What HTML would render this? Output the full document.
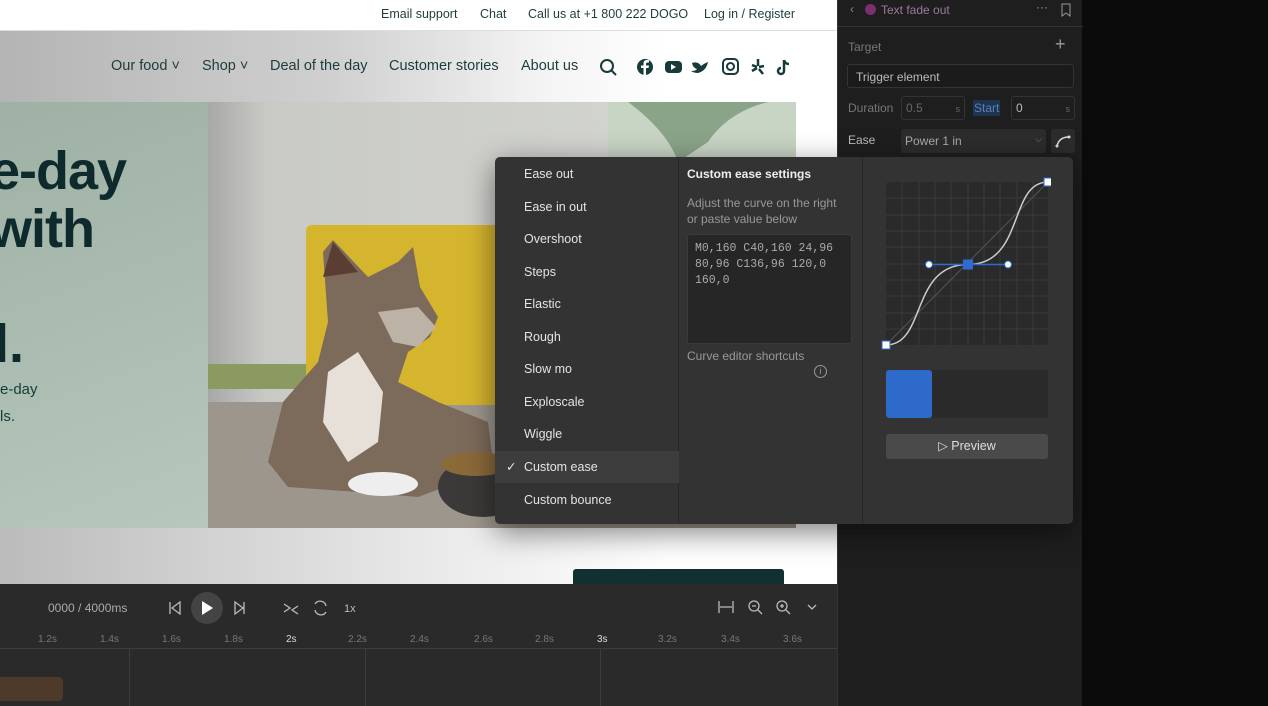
<!DOCTYPE html>
<html><head><meta charset="utf-8"><style>
*{margin:0;padding:0;box-sizing:border-box}
body{width:1268px;height:706px;overflow:hidden;background:#0b0b0b;font-family:"Liberation Sans",sans-serif;position:relative}
.a{position:absolute}
.top{left:0;top:0;width:837px;height:31px;background:#fff;border-bottom:1px solid #ddd}
.top span{position:absolute;top:7px;font-size:12.5px;color:#1e3c3c}
.nav{left:0;top:31px;width:837px;height:71px;background:linear-gradient(90deg,#b4b4b4 0%,#d0d0d0 40%,#f4f4f4 65%,#fff 80%)}
.nav span{position:absolute;top:27px;font-size:14.5px;color:#1e3c3c}
.menu div{position:absolute;left:29px;font-size:12.5px;color:#e4e4e4}
.tl{font-size:10px;color:#777;position:absolute;top:634px}
</style></head><body>
<div class="a" style="left:0;top:0;width:837px;height:584px;background:#fff"></div>
<div class="a top">
<span style="left:381px">Email support</span><span style="left:480px">Chat</span><span style="left:528px">Call us at +1 800 222 DOGO</span><span style="left:704px">Log in / Register</span>
</div>
<div class="a nav">
<span style="left:111px">Our food ˅</span><span style="left:202px">Shop ˅</span><span style="left:270px">Deal of the day</span><span style="left:389px">Customer stories</span><span style="left:521px">About us</span>
<svg class="a" style="left:598px;top:26px" width="200" height="20" viewBox="0 0 200 20" fill="#173a3a">
<circle cx="9" cy="9" r="6" fill="none" stroke="#173a3a" stroke-width="2"/><line x1="13" y1="13" x2="18" y2="18" stroke="#173a3a" stroke-width="2"/>
<circle cx="47" cy="10" r="8"/><path d="M48 18v-7h2.5l.5-2.5h-3v-1.5q0-1.5 1.5-1.5h1.5v-2.3q-1-.2-2.3-.2-3.2 0-3.2 3.5v2h-2.5v2.5h2.5v7z" fill="#fff"/>
<rect x="67" y="4" width="17" height="12" rx="4"/><path d="M73 7v6l5-3z" fill="#fff"/>
<path d="M94 6 Q100 4 103 9 Q107 6 110 5 Q108 14 100 16 Q96 16 93 14 Q98 14 99 12 Q95 11 94 6Z"/>
<rect x="125" y="2" width="15" height="15" rx="4" fill="none" stroke="#173a3a" stroke-width="2"/><circle cx="132.5" cy="9.5" r="3.5" fill="none" stroke="#173a3a" stroke-width="2"/>
<path d="M160 2v7M154 8l5 2M154 14l5-3M161 12l4 5M166 9l-5 1" stroke="#173a3a" stroke-width="2.5"/>
<path d="M186 3v11a3 3 0 1 1-3-3M186 3q1 4 5 4" fill="none" stroke="#173a3a" stroke-width="2.5"/>
</svg>
</div>
<div class="a" style="left:0;top:102px;width:208px;height:427px;background:linear-gradient(160deg,#9fb0a5,#b6c8bc);overflow:hidden">
<div class="a" style="left:-10px;top:40px;font-size:54px;font-weight:bold;color:#0e2a2c;line-height:58px;letter-spacing:-1px">e-day<br>with</div>
<div class="a" style="left:-6px;top:212px;font-size:54px;font-weight:bold;color:#0e2a2c;line-height:60px">l.</div>
<div class="a" style="left:0;top:274px;font-size:15px;color:#173a3a;line-height:27px">e-day<br>ls.</div>
</div>
<svg class="a" style="left:208px;top:102px" width="588" height="427" viewBox="0 0 588 427">
<defs><linearGradient id="w" x1="0" x2="1"><stop offset="0" stop-color="#a8a8a6"/><stop offset=".1" stop-color="#c9cac6"/><stop offset="1" stop-color="#d6d8d2"/></linearGradient></defs>
<rect width="588" height="427" fill="url(#w)"/>
<rect x="400" width="188" height="160" fill="#c8d4c4"/>
<path d="M420 0 Q460 30 470 60 L500 40 Q520 10 560 0Z" fill="#8aa48a"/>
<rect x="0" y="300" width="588" height="127" fill="#9d968c"/>
<rect x="0" y="262" width="100" height="25" fill="#8a9a60"/>
<rect x="98" y="123" width="200" height="180" rx="6" fill="#d6b52e"/>
<path d="M115 150 L125 138 L160 175 L190 160 L205 145 L212 185 L230 215 L222 235 L200 250 L190 280 L230 300 L280 320 L285 360 L250 380 L210 395 L150 390 L80 385 L60 360 L75 300 L110 260 L120 220Z" fill="#7c6a5a"/>
<path d="M170 210 L210 205 L228 225 L210 245 L185 240Z" fill="#bdb2a6"/>
<path d="M120 270 L150 250 L175 290 L170 340 L140 360 L115 320Z" fill="#e6e0d8"/>
<path d="M115 175 L125 140 L150 170Z" fill="#5a3e34"/>
<ellipse cx="175" cy="382" rx="35" ry="12" fill="#eee"/>
<ellipse cx="275" cy="385" rx="45" ry="30" fill="#3c3a38"/>
<ellipse cx="268" cy="362" rx="35" ry="12" fill="#8b6a3a"/>
</svg>
<div class="a" style="left:0;top:528px;width:837px;height:56px;background:linear-gradient(90deg,#bbb,#e8e8e8 50%,#fff 80%)"></div>
<div class="a" style="left:573px;top:569px;width:211px;height:15px;background:#12302f;border-radius:3px 3px 0 0"></div>
<div class="a" style="left:0;top:584px;width:837px;height:122px;background:#2a2a2a">
<div class="a" style="left:48px;top:17px;font-size:12px;color:#aaa">0000 / 4000ms</div>
<svg class="a" style="left:160px;top:8px" width="210" height="32" viewBox="0 0 210 32" fill="none" stroke="#bbb" stroke-width="1.3">
<path d="M10 10v12M20 10l-8 6 8 6z"/><circle cx="47" cy="16" r="16" fill="#444" stroke="none"/><path d="M42 9l11 7-11 7z" fill="#fff" stroke="none"/>
<path d="M75 10l8 6-8 6zM84 10v12"/><path d="M124 12l6 4-6 4M138 14l-6 4 6 4" /><path d="M155 12a6 6 0 0 1 11 2M166 20a6 6 0 0 1-11-2"/>
<text x="184" y="20" fill="#bbb" stroke="none" font-size="11" font-family="Liberation Sans">1x</text></svg>
<svg class="a" style="left:716px;top:14px" width="110" height="20" viewBox="0 0 110 20" fill="none" stroke="#bbb" stroke-width="1.3">
<path d="M3 3v12M17 3v12M4 9h12"/><circle cx="38" cy="8" r="5"/><path d="M42 12l4 4M36 8h4"/><circle cx="66" cy="8" r="5"/><path d="M70 12l4 4M64 8h4M66 6v4"/><path d="M92 7l4 4 4-4"/></svg>
<div class="a" style="left:0;top:64px;width:837px;height:1px;background:#3c3c3c"></div>
<div class="a" style="left:129px;top:65px;width:1px;height:57px;background:#3c3c3c"></div>
<div class="a" style="left:365px;top:65px;width:1px;height:57px;background:#3c3c3c"></div>
<div class="a" style="left:600px;top:65px;width:1px;height:57px;background:#3c3c3c"></div>
<div class="a" style="left:0;top:93px;width:63px;height:24px;background:#4e3a2a;border-radius:0 4px 4px 0"></div>
</div>
<div class="tl" style="left:38px">1.2s</div><div class="tl" style="left:100px">1.4s</div><div class="tl" style="left:162px">1.6s</div><div class="tl" style="left:224px">1.8s</div><div class="tl" style="left:286px;color:#ddd">2s</div><div class="tl" style="left:348px">2.2s</div><div class="tl" style="left:410px">2.4s</div><div class="tl" style="left:474px">2.6s</div><div class="tl" style="left:535px">2.8s</div><div class="tl" style="left:597px;color:#ddd">3s</div><div class="tl" style="left:658px">3.2s</div><div class="tl" style="left:721px">3.4s</div><div class="tl" style="left:783px">3.6s</div>
<div class="a" style="left:837px;top:0;width:245px;height:706px;background:#1e1e1e;border-left:1px solid #333">
<div class="a" style="left:12px;top:2px;font-size:12px;color:#888">‹</div>
<div class="a" style="left:27px;top:4px;width:11px;height:11px;border-radius:50%;background:#7a2f6e"></div>
<div class="a" style="left:43px;top:3px;font-size:12px;color:#9a7a9a">Text fade out</div>
<div class="a" style="left:198px;top:0;font-size:12px;color:#999">···</div>
<svg class="a" style="left:222px;top:3px" width="12" height="14"><path d="M2 1h8v12l-4-3-4 3z" fill="none" stroke="#999"/></svg>
<div class="a" style="left:0;top:26px;width:245px;height:1px;background:#333"></div>
<div class="a" style="left:10px;top:40px;font-size:12px;color:#777">Target</div>
<div class="a" style="left:217px;top:34px;font-size:18px;color:#999">+</div>
<div class="a" style="left:9px;top:64px;width:227px;height:24px;border:1px solid #333;border-radius:3px;background:#1b1b1b;font-size:12px;color:#bbb;padding:5px 8px">Trigger element</div>
<div class="a" style="left:10px;top:101px;font-size:12px;color:#777">Duration</div>
<div class="a" style="left:63px;top:96px;width:64px;height:24px;border:1px solid #333;border-radius:3px;font-size:12px;color:#666;padding:4px 4px">0.5<span style="float:right;font-size:9px;margin-top:3px">s</span></div>
<div class="a" style="left:135px;top:100px;font-size:12px;color:#5b7fb8;background:#1e3450;padding:1px 1px">Start</div>
<div class="a" style="left:173px;top:96px;width:64px;height:24px;border:1px solid #333;border-radius:3px;font-size:12px;color:#bbb;padding:4px 4px">0<span style="float:right;font-size:9px;margin-top:3px;color:#666">s</span></div>
<div class="a" style="left:10px;top:133px;font-size:12px;color:#bbb">Ease</div>
<div class="a" style="left:63px;top:129px;width:145px;height:24px;border-radius:3px;background:#2c2c2c;font-size:12px;color:#aaa;padding:5px 4px">Power 1 in<span style="float:right;font-size:9px;color:#888">⌵</span></div>
<div class="a" style="left:213px;top:129px;width:24px;height:24px;border-radius:3px;background:#2c2c2c"><svg width="24" height="24"><path d="M6 17 Q8 8 18 8" fill="none" stroke="#ddd" stroke-width="1.5"/><circle cx="6" cy="17" r="1.5" fill="#ddd"/><circle cx="18" cy="8" r="1.5" fill="#ddd"/></svg></div>
</div>
<div class="a" style="left:495px;top:157px;width:578px;height:367px;background:#333;border-radius:5px;box-shadow:0 8px 30px rgba(0,0,0,.5)">
<div class="a menu" style="left:0;top:0;width:184px;height:367px;border-right:1px solid #262626">
<div style="top:10px">Ease out</div><div style="top:43px">Ease in out</div><div style="top:75px">Overshoot</div><div style="top:108px">Steps</div><div style="top:140px">Elastic</div><div style="top:173px">Rough</div><div style="top:205px">Slow mo</div><div style="top:238px">Exploscale</div><div style="top:270px">Wiggle</div>
<div style="left:0;top:294px;width:184px;height:32px;background:#3d3d3d"></div>
<div style="left:11px;top:302px">✓</div><div style="top:303px">Custom ease</div><div style="top:336px">Custom bounce</div>
</div>
<div class="a" style="left:367px;top:0;width:1px;height:367px;background:#262626"></div>
<div class="a" style="left:192px;top:10px;font-size:12px;font-weight:bold;color:#eee">Custom ease settings</div>
<div class="a" style="left:192px;top:38px;font-size:12px;color:#999;line-height:16px">Adjust the curve on the right<br>or paste value below</div>
<div class="a" style="left:192px;top:77px;width:165px;height:110px;background:#262626;border:1px solid #3a3a3a;border-radius:3px;font-family:'Liberation Mono',monospace;font-size:11.5px;color:#aaa;line-height:16px;padding:6px 7px">M0,160 C40,160 24,96 80,96 C136,96 120,0 160,0</div>
<div class="a" style="left:192px;top:192px;font-size:12px;color:#999">Curve editor shortcuts</div>
<div class="a" style="left:319px;top:208px;width:13px;height:13px;border:1px solid #999;border-radius:50%;font-size:9px;color:#999;text-align:center;line-height:11px">i</div>
<svg class="a" style="left:386px;top:20px" width="170" height="175" viewBox="0 0 170 175">
<rect x="5" y="5" width="162" height="163" rx="3" fill="#2a2a2a"/>
<g stroke="#3a3a3a" stroke-width="1">
<path d="M21 5v163M38 5v163M54 5v163M70 5v163M87 5v163M103 5v163M119 5v163M136 5v163M152 5v163M5 21h162M5 38h162M5 54h162M5 70h162M5 87h162M5 103h162M5 119h162M5 136h162M5 152h162"/></g>
<path d="M5 168 L167 5" stroke="#555" stroke-width="1"/>
<path d="M5 168 C45.5 168 29.3 87.5 87 87.5 C143.7 87.5 127.5 5 167 5" fill="none" stroke="#ccc" stroke-width="1.5"/>
<path d="M48 87.5H127" stroke="#2f6bd0" stroke-width="1.5"/>
<circle cx="48" cy="87.5" r="3.5" fill="#fff" stroke="#2f6bd0"/><circle cx="127" cy="87.5" r="3.5" fill="#fff" stroke="#2f6bd0"/>
<rect x="82" y="82.5" width="10" height="10" fill="#2f6bd0"/>
<rect x="1" y="164" width="8" height="8" fill="#fff" stroke="#2f6bd0"/><rect x="163" y="1" width="8" height="8" fill="#fff" stroke="#2f6bd0"/>
</svg>
<div class="a" style="left:391px;top:213px;width:162px;height:48px;background:#2a2a2a;border-radius:3px"></div>
<div class="a" style="left:391px;top:213px;width:46px;height:48px;background:#2d6ac9;border-radius:3px"></div>
<div class="a" style="left:391px;top:277px;width:162px;height:25px;background:#4a4a4a;border-radius:3px;font-size:12.5px;color:#ddd;text-align:center;line-height:25px">▷ Preview</div>
</div>
</body></html>
